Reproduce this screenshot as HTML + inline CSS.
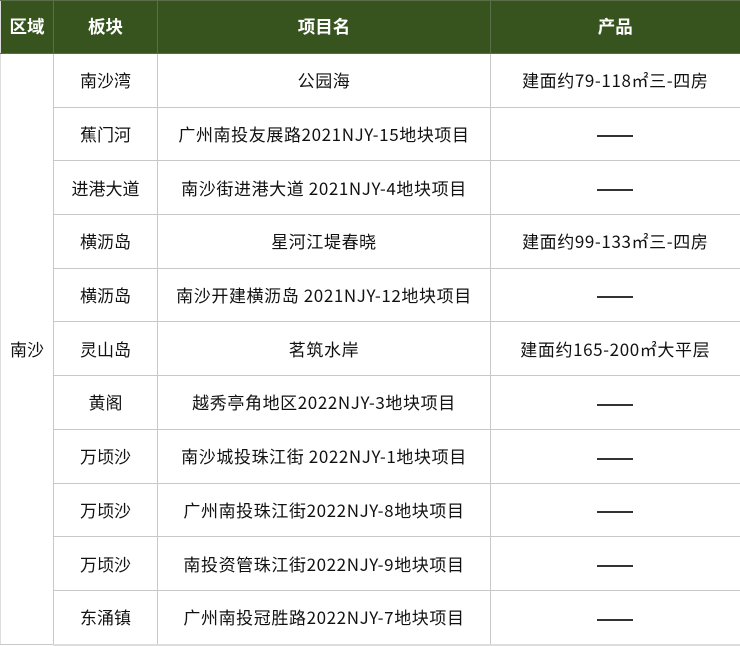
<!DOCTYPE html>
<html><head><meta charset="utf-8"><style>
body{margin:0;background:#fff;width:740px;height:645px;overflow:hidden;font-family:"Noto Sans CJK SC",sans-serif;}
table{position:absolute;left:0;top:0;border-collapse:collapse;width:740px;table-layout:fixed;}
td,th{border:1px solid #c8c8c8;text-align:center;font-size:17px;color:#111;padding:0;height:52.7px;line-height:20px;white-space:nowrap;}
th{background:#37541f;color:#fff;font-weight:bold;height:52px;border-color:#5a6e48;font-size:17.5px;}
tr:last-child td{border-bottom:2px solid #ddd;}
td:first-child,th:first-child{border-left:1px solid #ddd;}
td:last-child,th:last-child{border-right:2px solid #ddd;}
.n,.m{letter-spacing:0.6px;}
.d{display:inline-block;width:36px;height:2px;background:#333;vertical-align:middle;}
</style></head><body>
<table>
<colgroup><col style="width:53px"><col style="width:104px"><col style="width:333px"><col style="width:250px"></colgroup>
<tr><th>区域</th><th>板块</th><th>项目名</th><th>产品</th></tr>
<tr><td rowspan="11">南沙</td><td>南沙湾</td><td class="m">公园海</td><td class="n">建面约79-118㎡三-四房</td></tr>
<tr><td>蕉门河</td><td class="m">广州南投友展路2021NJY-15地块项目</td><td><span class="d"></span></td></tr>
<tr><td>进港大道</td><td class="m">南沙街进港大道 2021NJY-4地块项目</td><td><span class="d"></span></td></tr>
<tr><td>横沥岛</td><td class="m">星河江堤春晓</td><td class="n">建面约99-133㎡三-四房</td></tr>
<tr><td>横沥岛</td><td class="m">南沙开建横沥岛 2021NJY-12地块项目</td><td><span class="d"></span></td></tr>
<tr><td>灵山岛</td><td class="m">茗筑水岸</td><td class="n">建面约165-200㎡大平层</td></tr>
<tr><td>黄阁</td><td class="m">越秀亭角地区2022NJY-3地块项目</td><td><span class="d"></span></td></tr>
<tr><td>万顷沙</td><td class="m">南沙城投珠江街 2022NJY-1地块项目</td><td><span class="d"></span></td></tr>
<tr><td>万顷沙</td><td class="m">广州南投珠江街2022NJY-8地块项目</td><td><span class="d"></span></td></tr>
<tr><td>万顷沙</td><td class="m">南投资管珠江街2022NJY-9地块项目</td><td><span class="d"></span></td></tr>
<tr><td>东涌镇</td><td class="m">广州南投冠胜路2022NJY-7地块项目</td><td><span class="d"></span></td></tr>
</table>
</body></html>
